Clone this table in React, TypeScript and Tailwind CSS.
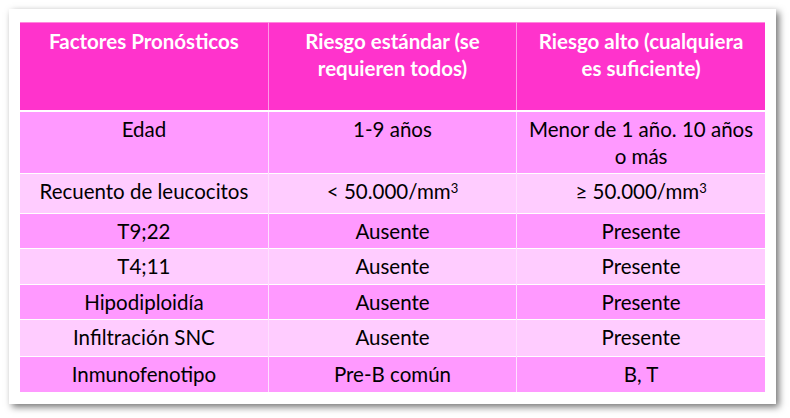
const rows: { factor: string; std: React.ReactNode; high: React.ReactNode; h: string }[] = [
  { factor: "Edad", std: "1-9 años", high: <>Menor de 1 año. 10 años<br />o más</>, h: "h-[63px]" },
  {
    factor: "Recuento de leucocitos",
    std: <>&lt; 50.000/mm<sup className="text-[13px]">3</sup></>,
    high: <>≥ 50.000/mm<sup className="text-[13px]">3</sup></>,
    h: "h-[40px]",
  },
  { factor: "T9;22", std: "Ausente", high: "Presente", h: "h-[35px]" },
  { factor: "T4;11", std: "Ausente", high: "Presente", h: "h-[36px]" },
  { factor: "Hipodiploidía", std: "Ausente", high: "Presente", h: "h-[35px]" },
  { factor: "Infiltración SNC", std: "Ausente", high: "Presente", h: "h-[37px]" },
  { factor: "Inmunofenotipo", std: "Pre-B común", high: "B, T", h: "h-[35px]" },
];

export default function App() {
  return (
    <div className="w-[790px] h-[418px] bg-white pt-[9px] pl-[9px] font-['Lato',sans-serif]">
      <div className="w-[767px] h-[395px] bg-white pt-[13px] px-[11px] shadow-[3px_3px_7px_rgba(0,0,0,0.55)]">
        <table className="w-[745px] border-collapse table-fixed text-[20.5px] leading-[27px] text-black">
          <thead>
            <tr className="h-[88px] bg-[#ff33cc] border-t border-[#ff88dd] border-b-2 border-b-white">
              <th className="align-top pt-[5px] px-1 font-bold text-white border-r border-[#ff99e6]">
                Factores Pronósticos
              </th>
              <th className="align-top pt-[5px] px-1 font-bold text-white border-r border-[#ff99e6]">
                Riesgo estándar (se
                <br />
                requieren todos)
              </th>
              <th className="align-top pt-[5px] px-1 font-bold text-white">
                Riesgo alto (cualquiera
                <br />
                es suficiente)
              </th>
            </tr>
          </thead>
          <tbody>
            {rows.map((r, i) => (
              <tr
                key={r.factor}
                className={`${r.h} ${i % 2 === 0 ? "bg-[#ff99ff]" : "bg-[#ffccff]"} border-b border-white last:border-b-0`}
              >
                <td className="align-top pt-[4px] px-1 text-center border-r border-[#ffe0ff]">{r.factor}</td>
                <td className="align-top pt-[4px] px-1 text-center border-r border-[#ffe0ff]">{r.std}</td>
                <td className="align-top pt-[4px] px-1 text-center">{r.high}</td>
              </tr>
            ))}
          </tbody>
        </table>
      </div>
    </div>
  );
}
